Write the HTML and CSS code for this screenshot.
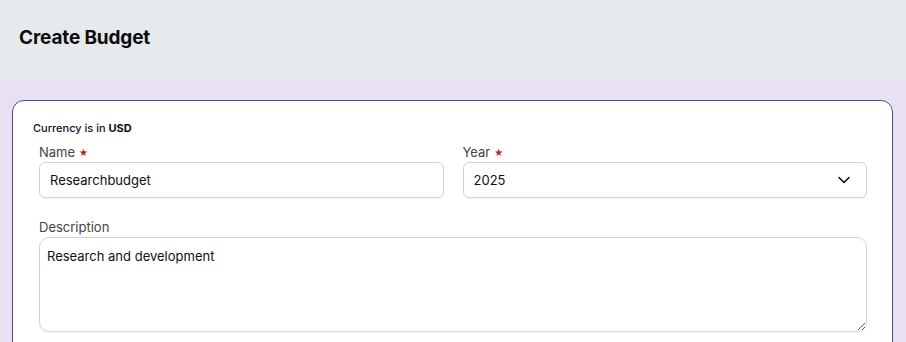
FILE: index.html
```html
<!DOCTYPE html>
<html lang="en">
  <head>
    <meta charset="UTF-8" />
    <meta name="viewport" content="width=device-width, initial-scale=1.0" />
    <title>Create Budget</title>
    <link rel="stylesheet" href="styles.css">
  </head>
  <body>
    <div class="page-header">
      <h1>Create Budget</h1>
    </div>

    <div class="page-body">
      <div class="card">
        <p class="currency">Currency is in <strong>USD</strong></p>

        <form class="budget-form">
          <div class="field">
            <label for="name">Name <span class="req">&#9733;</span></label>
            <input type="text" id="name" value="Researchbudget" />
          </div>

          <div class="field">
            <label for="year">Year <span class="req">&#9733;</span></label>
            <div class="select-wrap">
              <select id="year">
                <option>2025</option>
              </select>
              <svg class="chevron" width="14" height="14" viewBox="0 0 14 14">
                <path d="M2 4.5 L7 9.5 L12 4.5" fill="none" stroke="#111" stroke-width="1.6" stroke-linecap="round" stroke-linejoin="round" />
              </svg>
            </div>
          </div>

          <div class="field full">
            <label for="description">Description</label>
            <textarea id="description">Research and development</textarea>
          </div>
        </form>
      </div>
    </div>
  </body>
</html>
```

FILE: styles.css
```css
body {
  margin: 0;
  font-family: Inter, "Noto Sans", Arial, sans-serif;
  background-color: #e8e1f4;
  color: #111;
}

.page-header {
  height: 81px;
  background-color: #e7eaed;
  display: flex;
  align-items: center;
  padding: 0 19px;
}

.page-header h1 {
  margin: 0;
  font-size: 19px;
  font-weight: 700;
  letter-spacing: -0.15px;
  color: #0d0d0d;
  padding-bottom: 6px;
}

.page-body {
  padding: 19px 13px 0 12px;
}

.card {
  background: #fff;
  border: 1px solid #5b4a78;
  border-radius: 12px;
  padding: 20px 25px 30px 20px;
  min-height: 280px;
}

.currency {
  margin: 0 0 9px;
  font-size: 11px;
  font-weight: 500;
}

.currency strong {
  font-weight: 700;
}

.budget-form {
  display: grid;
  grid-template-columns: 1fr 1fr;
  column-gap: 19px;
  row-gap: 21px;
  padding-left: 6px;
}

.field {
  display: flex;
  flex-direction: column;
  gap: 2px;
}

.field.full {
  grid-column: 1 / -1;
}

.field label {
  font-size: 13px;
  color: #444;
}

.req {
  color: #a82424;
  font-size: 9px;
  margin-left: 0;
  position: relative;
  top: -1px;
}

.field input,
.field select,
.field textarea {
  font-family: inherit;
  font-size: 13px;
  color: #111;
  border: 1px solid #d3d3dc;
  border-radius: 6px;
  background: #fff;
  box-shadow: 0 1px 2px rgba(0, 0, 0, 0.06);
  box-sizing: border-box;
  outline: none;
}

.field input,
.field select {
  height: 36px;
  padding: 0 10px;
}

.select-wrap {
  position: relative;
}

.field select {
  width: 100%;
  appearance: none;
  -webkit-appearance: none;
}

.chevron {
  position: absolute;
  right: 16px;
  top: 11px;
  pointer-events: none;
}

.field textarea {
  height: 95px;
  padding: 10px 7px;
  border-radius: 10px;
  resize: vertical;
}
```
